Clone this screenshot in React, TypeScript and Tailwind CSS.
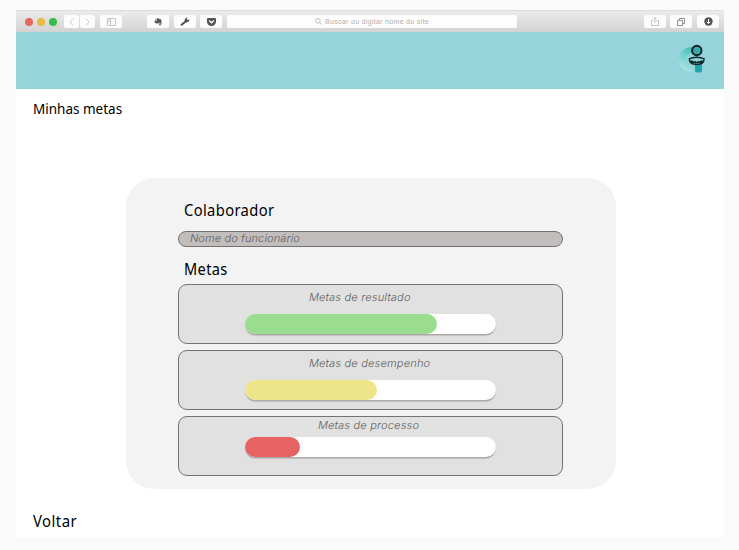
import type { ReactNode } from "react";

function ToolButton({ children, className = "w-[22px]" }: { children?: ReactNode; className?: string }) {
  return (
    <div className={`flex h-[13px] shrink-0 items-center justify-center rounded-[2px] bg-[#fcfcfc] ${className}`}>
      {children}
    </div>
  );
}

function BrowserBar() {
  return (
    <div className="flex h-[22px] items-center border-t border-[#dcdcdc] bg-gradient-to-b from-[#ebebeb] to-[#d3d3d3] pl-[9px]">
      <div className="flex gap-[4px]">
        <span className="size-[8px] rounded-full bg-[#e8665c]" />
        <span className="size-[8px] rounded-full bg-[#edb840]" />
        <span className="size-[8px] rounded-full bg-[#35bd4b]" />
      </div>
      <ToolButton className="ml-[7px] w-[15px]">
        <svg className="h-[8px] w-[5px]" viewBox="0 0 5 8" fill="none" stroke="#c9c9c9"><path d="M4 .7 1 4l3 3.3" /></svg>
      </ToolButton>
      <ToolButton className="ml-[1px] w-[15px]">
        <svg className="h-[8px] w-[5px]" viewBox="0 0 5 8" fill="none" stroke="#c9c9c9"><path d="m1 .7 3 3.3-3 3.3" /></svg>
      </ToolButton>
      <ToolButton className="ml-[5px] w-[22px]">
        <svg className="h-[8px] w-[9px]" viewBox="0 0 9 8" fill="none" stroke="#b7b7b7" strokeWidth=".8"><path d="M.5.5h8v7h-8zM3.5.5v7M1.2 2h1.3M1.2 3.3h1.3" /></svg>
      </ToolButton>
      <ToolButton className="ml-[25px] w-[22px]">
        <svg className="h-[8px] w-[8px]" viewBox="0 0 8 8" fill="#555"><path d="M2.4.5v1.900H.5L2.400.5Zm.5-.2h1.600l.6.700 1.900.3c.7 1.800.6 4 .2 5.500-.2.8-1.800.9-2.100.2-.3-.9.2-1.500.9-1.400v.6c-.4 0-.5.3-.2.5.7.2.8-.4.6-1.200-.7-.2-1.300-.3-1.600-.9-.1 1-.5 1.200-1.200 1C1.600 5.300.6 4.700.5 2.900h2.400Z" /></svg>
      </ToolButton>
      <ToolButton className="ml-[5px] w-[22px]">
        <svg className="h-[9px] w-[10px]" viewBox="0 0 10 9" fill="#4b4b4b"><path d="M.8 7.300 4.700 4C4.500 2.200 5.500.6 7.300.3l-.7 1.800 1 .9 1.900-.4c-.2 2-1.800 3.100-3.500 2.700L2 8.700C1.300 9.200.2 8 .8 7.300Z" /></svg>
      </ToolButton>
      <ToolButton className="ml-[4px] w-[22px]">
        <svg className="h-[8px] w-[9px]" viewBox="0 0 9 8"><path d="M1 0h7q1 0 1 1v2.600a4.500 4.300 0 0 1-9 0V1q0-1 1-1Z" fill="#555" /><path d="m2.400 2.800 2.100 2 2.100-2" fill="none" stroke="white" strokeWidth="1.200" strokeLinecap="round" /></svg>
      </ToolButton>
      <div className="ml-[5px] flex h-[13px] w-[290px] shrink-0 items-center justify-center gap-[3px] rounded-[2px] bg-[#fdfdfd] text-[#b0b0b0]">
        <svg className="size-[7px]" viewBox="0 0 7 7" fill="none" stroke="currentColor" strokeWidth=".8"><circle cx="2.900" cy="2.900" r="2.300" /><path d="m4.600 4.600 2 2" /></svg>
        <span className="whitespace-nowrap font-['Liberation_Sans',sans-serif] text-[7px] leading-[13px] tracking-[0.31px]">Buscar ou digitar nome do site</span>
      </div>
      <ToolButton className="ml-[127px] w-[22px]">
        <svg className="h-[9px] w-[8px]" viewBox="0 0 8 9" fill="none" stroke="#b5b5b5" strokeWidth=".8"><path d="M2.500 3.500h-2v5h7v-5h-2M4 6V.6M2.500 2.100 4 .6l1.500 1.500" /></svg>
      </ToolButton>
      <ToolButton className="ml-[4px] w-[22px]">
        <svg className="size-[8px]" viewBox="0 0 8 8" fill="none" stroke="#858585" strokeWidth=".9"><path d="M2.400 2V.5h5.100v5H6M.5 2.400h5v5.100h-5z" /></svg>
      </ToolButton>
      <ToolButton className="ml-[5px] w-[22px]">
        <svg className="size-[9px]" viewBox="0 0 9 9"><circle cx="4.500" cy="4.500" r="4.200" fill="#505050" /><path d="M4.500 2v4.500M2.700 4.700l1.800 1.900 1.800-1.900" fill="none" stroke="white" /></svg>
      </ToolButton>
    </div>
  );
}

function Logo() {
  return (
    <svg className="h-[30px] w-[30px]" viewBox="0 0 30 30">
      <defs>
        <linearGradient id="disc" x1=".8" y1="0" x2=".3" y2="1">
          <stop offset="0" stopColor="#3dbbb3" />
          <stop offset=".45" stopColor="#72d0cc" />
          <stop offset="1" stopColor="#b4e3e6" />
        </linearGradient>
      </defs>
      <path d="M15 3C6 3 .5 8.500.5 15.500S5.500 28 14 28c2 0 4-.4 5-1V6Z" fill="url(#disc)" />
      <path d="M14 9c-4 1-6 4-6 7s2 6 6 7l4-1V10Z" fill="#8fd5d7" />
      <path d="M17 20h7v6.500q0 2-2 2h-3q-2 0-2-2Z" fill="#20a6aa" />
      <circle cx="18.800" cy="6.500" r="4.700" fill="#36a9a8" stroke="#122426" strokeWidth="1.900" />
      <path d="M11.200 14.800c4-2.100 11-2.100 15 0-.1 3.600-2.400 5.900-7.500 5.900s-7.400-2.300-7.500-5.900Z" fill="#8ed5d4" stroke="#10272a" strokeWidth="1.300" />
      <path d="M12 16.800c1.700-.6 3.200-.3 4.200.7l1.200-.6 1.300 1.100 1.300-1.100 1.200.6c1-1 2.500-1.300 4.200-.7-.4 2.200-1.500 3.300-3.400 3.300l-1-1-1 1-1.300-.8-1.300.8-1-1-1 1c-1.900 0-3-1.100-3.400-3.300Z" fill="#10272a" />
    </svg>
  );
}

type GoalProps = { label: string; fill: string; labelClass?: string; barClass?: string };

function Goal({ label, fill, labelClass = "pt-[5px] pl-[130px]", barClass = "mt-[9px]" }: GoalProps) {
  return (
    <div className="h-[60px] rounded-[9px] border border-[#737373] bg-[#e1e1e1]">
      <div className={`font-['Inter',sans-serif] text-[11px] leading-[15px] font-light tracking-[0.2px] text-[#606060] ${labelClass}`}>
        <span className="block w-max -skew-x-[10deg]">{label}</span>
      </div>
      <div className={`ml-[66px] h-[20px] w-[251px] rounded-full bg-white shadow-[0_1.5px_1px_#aaa6a6] ${barClass}`}>
        <div className={`h-full rounded-full ${fill}`} />
      </div>
    </div>
  );
}

export default function App() {
  return (
    <div className="h-[550px] w-[739px] overflow-hidden bg-[#fafafa] pt-[10px] pl-[16px] font-['Noto_Sans',sans-serif] text-black">
      <div className="flex h-[527px] w-[708px] flex-col bg-white">
        <BrowserBar />
        <header className="flex h-[57px] shrink-0 justify-end bg-[#97d3db] pt-[12px] pr-[16px]">
          <Logo />
        </header>
        <h1 className="mt-[9px] ml-[17px] w-max origin-left scale-x-[0.9] text-[15px] leading-[20px]">Minhas metas</h1>
        <main className="mt-[60px] ml-[110px] h-[311px] w-[490px] shrink-0 rounded-[28px] bg-[#f3f3f3] pt-[22px] pl-[52px]">
          <div className="w-[385px]">
            <h2 className="ml-[6px] w-max origin-left scale-x-[0.92] text-[16px] leading-[20px] tracking-[0.4px]">Colaborador</h2>
            <div className="mt-[11px] h-[16px] rounded-full border border-[#737171] bg-[#c2bebd] pl-[11px] font-['Inter',sans-serif] text-[11px] leading-[13px] font-light tracking-[0.12px] text-[#606060]">
              <span className="block w-max -skew-x-[10deg]">Nome do funcionário</span>
            </div>
            <h2 className="mt-[12px] ml-[6px] w-max origin-left scale-x-[0.91] text-[16px] leading-[20px] tracking-[0.4px]">Metas</h2>
            <div className="mt-[5px] flex flex-col gap-[6px]">
              <Goal label="Metas de resultado" fill="w-[192px] bg-[#9bdd8f]" />
              <Goal label="Metas de desempenho" fill="w-[132px] bg-[#eee48a]" />
              <Goal label="Metas de processo" fill="w-[55px] bg-[#e56363]" labelClass="pt-[1px] pl-[139px]" barClass="mt-[4px]" />
            </div>
          </div>
        </main>
        <div className="mt-[22px] ml-[17px] w-max origin-left scale-x-[0.93] text-[16px] leading-[20px] tracking-[0.5px]">Voltar</div>
      </div>
    </div>
  );
}
